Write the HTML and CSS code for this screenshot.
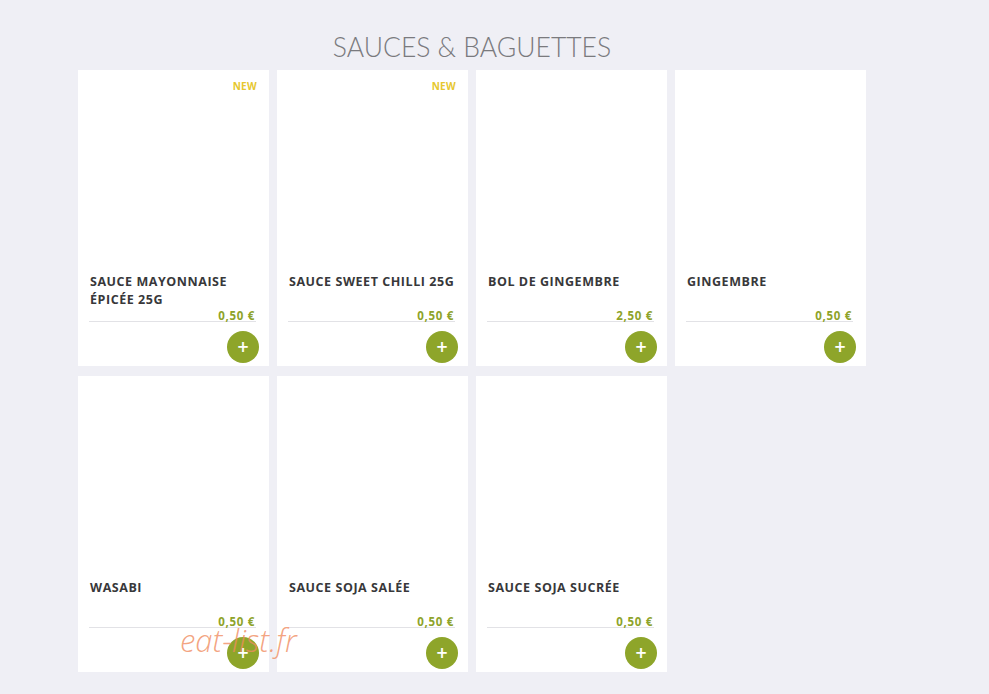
FILE: index.html
```html
<!DOCTYPE html>
<html lang="fr">
<head>
    <meta charset="UTF-8">
    <meta name="viewport" content="width=device-width, initial-scale=1.0">
    <title>Sauces &amp; Baguettes</title>
    <link rel="stylesheet" href="styles.css">
</head>
<body>
    <div class="menu">
        <h2 class="section-title">SAUCES &amp; BAGUETTES</h2>

        <div class="products">
            <div class="product">
                <div class="thumb"><span class="badge">NEW</span></div>
                <div class="name">SAUCE MAYONNAISE ÉPICÉE 25G</div>
                <div class="price">0,50 €</div>
                <button class="add">+</button>
            </div>
            <div class="product">
                <div class="thumb"><span class="badge">NEW</span></div>
                <div class="name">SAUCE SWEET CHILLI 25G</div>
                <div class="price">0,50 €</div>
                <button class="add">+</button>
            </div>
            <div class="product">
                <div class="thumb"></div>
                <div class="name">BOL DE GINGEMBRE</div>
                <div class="price">2,50 €</div>
                <button class="add">+</button>
            </div>
            <div class="product">
                <div class="thumb"></div>
                <div class="name">GINGEMBRE</div>
                <div class="price">0,50 €</div>
                <button class="add">+</button>
            </div>
            <div class="product">
                <div class="thumb"></div>
                <div class="name">WASABI</div>
                <div class="price">0,50 €</div>
                <button class="add">+</button>
            </div>
            <div class="product">
                <div class="thumb"></div>
                <div class="name">SAUCE SOJA SALÉE</div>
                <div class="price">0,50 €</div>
                <button class="add">+</button>
            </div>
            <div class="product">
                <div class="thumb"></div>
                <div class="name">SAUCE SOJA SUCRÉE</div>
                <div class="price">0,50 €</div>
                <button class="add">+</button>
            </div>
        </div>
    </div>

    <div class="watermark">eat-list.fr</div>
</body>
</html>
```

FILE: styles.css
```css
body {
    margin: 0;
    padding: 0;
    background: #efeff5;
    font-family: "Open Sans", Arial, sans-serif;
    height: 694px;
    overflow: hidden;
    position: relative;
}

.menu {
    width: 788px;
    padding: 30px 0 0 78px;
}

.section-title {
    margin: 0 0 6px;
    text-align: center;
    font-family: Lato, "Open Sans", sans-serif;
    font-weight: 300;
    font-size: 26.5px;
    line-height: 34px;
    color: #7a7a7e;
}

/* grille des produits */
.products {
    display: grid;
    grid-template-columns: repeat(4, 191px);
    column-gap: 8px;
    row-gap: 10px;
}

.product {
    height: 296px;
    background: #fff;
    display: flex;
    flex-direction: column;
    padding: 0 10px 0 11px;
    box-sizing: border-box;
}

.thumb {
    flex: none;
    height: 203px;
    display: flex;
    justify-content: flex-end;
    align-items: flex-start;
}

.badge {
    margin: 9px 2px 0 0;
    font-size: 10px;
    font-weight: 700;
    color: #e6c72e;
    letter-spacing: 0.3px;
}

.name {
    flex: none;
    height: 36px;
    padding-left: 1px;
    font-size: 12.5px;
    font-weight: 700;
    line-height: 18px;
    color: #38383a;
    letter-spacing: 0.55px;
}

.price {
    flex: none;
    margin-right: 3px;
    padding: 2px 1px 0 0;
    text-align: right;
    font-size: 11.5px;
    font-weight: 700;
    line-height: 10px;
    color: #8ea32a;
    letter-spacing: 0.7px;
    border-bottom: 1px solid #e2e2e6;
}

.add {
    flex: none;
    align-self: flex-end;
    width: 32px;
    height: 32px;
    margin: 9px 0 3px;
    border: none;
    border-radius: 50%;
    background: #8ea52a;
    color: #fff;
    font-family: "DejaVu Sans", sans-serif;
    font-weight: 700;
    font-size: 15px;
    line-height: 32px;
    padding: 0;
    cursor: pointer;
}

.watermark {
    position: absolute;
    left: 180px;
    top: 619px;
    font-family: "Open Sans", sans-serif;
    font-style: italic;
    font-weight: 300;
    font-size: 31px;
    color: rgba(240, 140, 95, 0.8);
}
```
